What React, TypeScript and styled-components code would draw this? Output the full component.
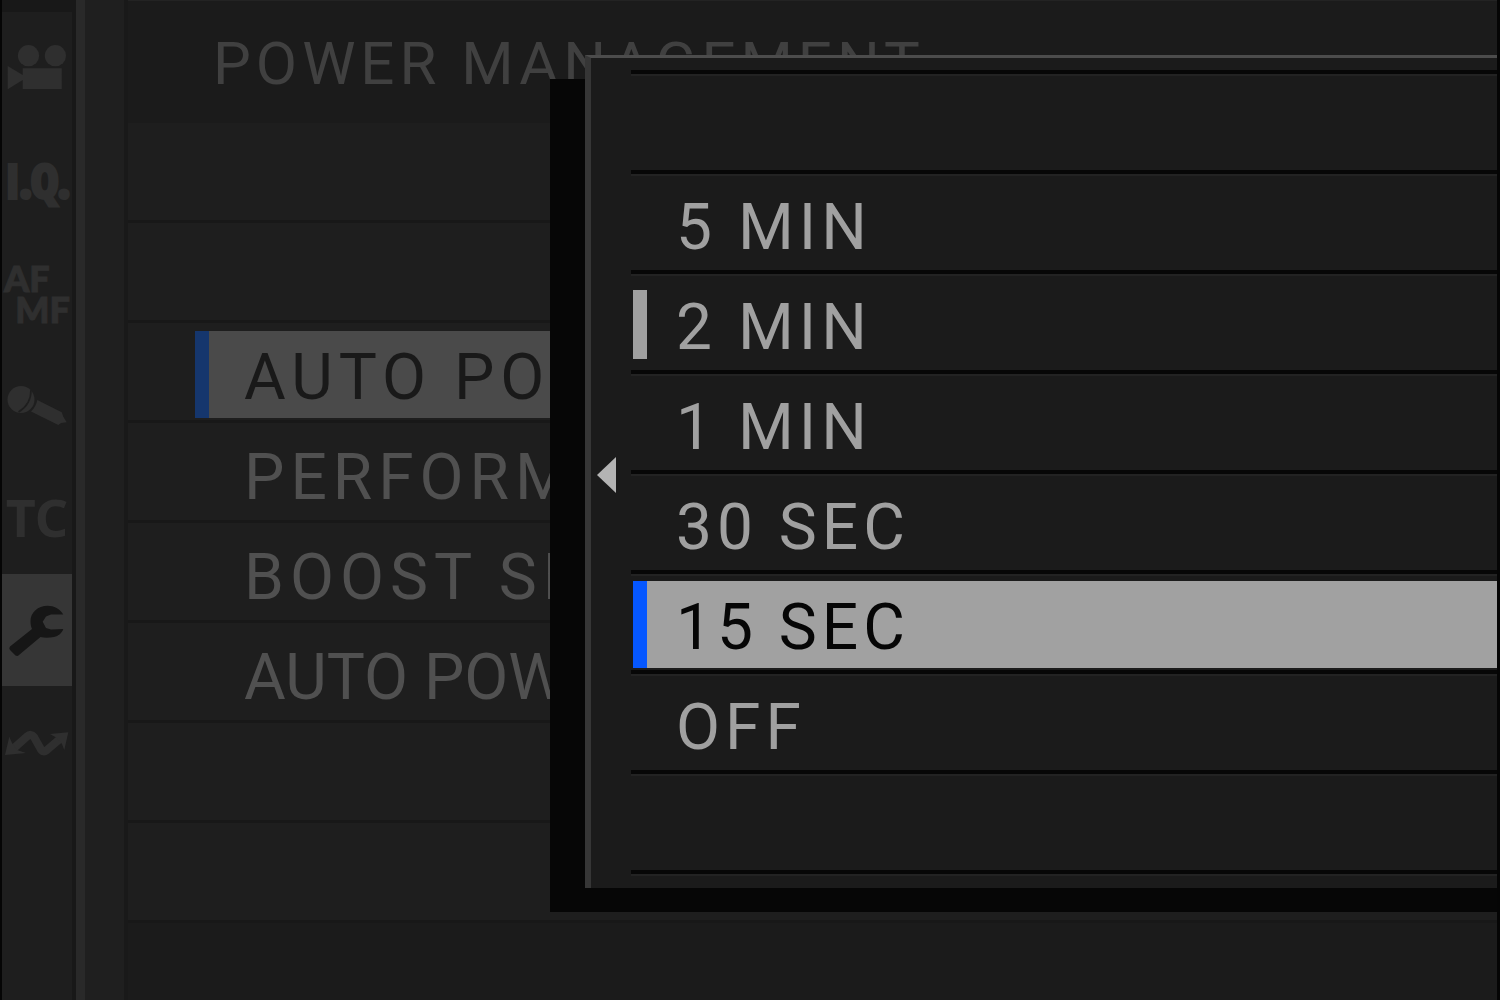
import React, { useState } from "react";
import styled, { createGlobalStyle } from "styled-components";

const GlobalStyle = createGlobalStyle`
  *, *::before, *::after { box-sizing: border-box; }
  body { margin: 0; background: #050505; }
  button { border: 0; margin: 0; padding: 0; background: none; color: inherit; font: inherit; text-align: left; }
  ul { list-style: none; margin: 0; padding: 0; }
`;

const Screen = styled.div`
  position: relative;
  display: flex;
  min-height: 100vh;
  overflow: hidden;
  background: #1b1b1b;
  border: solid #050505;
  border-width: 0 3px 0 2px;
  font-family: Roboto, "Liberation Sans", sans-serif;
`;

const Rail = styled.nav`
  flex: none;
  width: 74px;
  padding-top: 2px;
  background: #1e1e1e;
  border-top: 12px solid #181818;
  border-right: 4px solid #181818;
`;

const Tab = styled.button<{ $active?: boolean }>`
  display: flex;
  align-items: center;
  justify-content: center;
  width: 100%;
  height: 112px;
  color: ${(p) => (p.$active ? "#161616" : "#2f2f2f")};
  background: ${(p) => (p.$active ? "#363636" : "transparent")};
`;

const TabArt = styled.svg`
  display: block;
  width: 70px;
  height: 112px;
`;

const QualityMark = styled.span`
  padding: 0 0 4px 2px;
  font: 700 46px/56px "Liberation Sans Narrow", "Open Sans Condensed", Roboto, sans-serif;
  -webkit-text-stroke: 4px currentColor;
`;

const FocusMark = styled.span`
  display: flex;
  flex-direction: column;
  width: 66px;
  font: 900 36px/31px Lato, sans-serif;
  -webkit-text-stroke: 1px currentColor;
`;

const FocusLine = styled.span<{ $end?: boolean }>`
  align-self: ${(p) => (p.$end ? "flex-end" : "flex-start")};
`;

const TimeMark = styled.span`
  padding-bottom: 2px;
  font: 700 52px/56px "Noto Sans", sans-serif;
`;

const Gutter = styled.div`
  flex: none;
  width: 52px;
  background: #1f1f1f;
  border-left: 9px solid #292929;
  border-right: 4px solid #191919;
`;

const Content = styled.main`
  flex: 1;
  min-width: 0;
`;

const Title = styled.h1`
  margin: 0;
  height: 123px;
  padding: 28px 0 0 85px;
  font-size: 60px;
  line-height: 70px;
  font-weight: 400;
  letter-spacing: 5px;
  white-space: nowrap;
  color: #404040;
  border-top: 1px solid #232323;
`;

const MenuRow = styled.li`
  height: 100px;
  padding: 8px 0 2px 67px;
  background: #1e1e1e;
  border-bottom: 3px solid #181818;
`;

const Entry = styled.button<{ $marker: string; $fill: string; $ink: string }>`
  display: flex;
  align-items: center;
  width: 100%;
  height: 87px;
  padding: 7px 0 0 29px;
  overflow: hidden;
  font-size: 64px;
  line-height: 76px;
  letter-spacing: 5px;
  white-space: nowrap;
  color: ${(p) => p.$ink};
  background: ${(p) => p.$fill};
  border-left: 14px solid ${(p) => p.$marker};
`;

const MenuEntry = styled(Entry)<{ $tight?: boolean }>`
  padding-left: 35px;
  letter-spacing: ${(p) => (p.$tight ? "normal" : "6px")};
`;

const Popup = styled.section`
  position: absolute;
  top: 55px;
  left: 39%;
  right: 0;
  display: grid;
  grid-template-columns: 40px 1fr;
  padding: 12px 0;
  background: #1b1b1b;
  border-top: 3px solid #4c4c4c;
  border-left: 6px solid #363636;
  box-shadow: -35px 24px 0 #060606, 0 24px 0 #060606;
`;

const Back = styled.button`
  display: flex;
  align-items: center;
  padding: 4px 0 0 6px;
`;

const OptionRow = styled.li`
  height: 100px;
  padding: 7px 0 2px 2px;
  border-top: 4px solid #070707;
  box-shadow: inset 0 2px 0 #232323;

  &:last-child {
    height: 6px;
    padding: 0;
  }
`;

const Option = styled(Entry)<{ $stored?: boolean }>`
  border-image: ${(p) =>
    p.$stored
      ? "linear-gradient(transparent 9px, #a0a0a0 9px, #a0a0a0 78px, transparent 78px) 0 0 0 14"
      : "none"};
`;

const MovieIcon = () => (
  <TabArt viewBox="2 0 70 112" fill="currentColor" aria-hidden="true">
    <circle cx="28.5" cy="41.7" r="10.6" />
    <circle cx="55.4" cy="41.7" r="10.6" />
    <path d="M7.7 52 L22.7 61 V54.3 H61.7 V75 H22.7 V66 L7.7 75.3 Z" />
  </TabArt>
);

const MicIcon = () => (
  <TabArt viewBox="2 0 70 112" fill="currentColor" aria-hidden="true">
    <circle cx="21" cy="49.5" r="13.5" />
    <path d="M37.3 50 L61.7 62.3 L63.3 66.7 L66.7 72.3 L61 73 L58.3 75 L31 61.5 Q36 57 37.3 50 Z" />
    <path d="M31 40 C31 50 27 57 18.5 62" fill="none" stroke="#1e1e1e" strokeWidth="1.6" />
  </TabArt>
);

const WrenchIcon = () => (
  <TabArt viewBox="2 0 70 112" fill="currentColor" aria-hidden="true">
    <path d="M63.3 40.5 C60 34.5 54 31.7 47.5 31.7 C38 31.7 30.5 38.5 30.5 47 C30.5 50 31 53 32 55 L10 72.5 Q8.5 74 10 76 L15.5 81.5 Q17.5 82.5 19 81 L40.5 63 C44 64 49 64 54 63 C58.5 62 62 59 63.3 55 L51 55.5 L46 54 L42.7 47.7 L46 42.5 L51 40.5 Z" />
  </TabArt>
);

const TransferIcon = () => (
  <TabArt viewBox="2 0 70 112" fill="currentColor" aria-hidden="true">
    <path
      d="M13 63 L27 50.5 Q31 47 34 51 L41 63.5 Q43 67 47 64 L61 52"
      fill="none"
      stroke="currentColor"
      strokeWidth="8"
    />
    <path d="M5 69 L9.3 50.7 L12 57 L17 64 L26 67 Z" />
    <path d="M68.3 46.3 L50 48 L57 52 L62 58 L64.3 64 Z" />
  </TabArt>
);

const tabs = [
  { name: "Movie", art: <MovieIcon /> },
  { name: "Image quality", art: <QualityMark>I.Q.</QualityMark> },
  {
    name: "Focus",
    art: (
      <FocusMark>
        <FocusLine>AF</FocusLine>
        <FocusLine $end>MF</FocusLine>
      </FocusMark>
    ),
  },
  { name: "Audio", art: <MicIcon /> },
  { name: "Time code", art: <TimeMark>TC</TimeMark> },
  { name: "Set up", art: <WrenchIcon /> },
  { name: "Transfer", art: <TransferIcon /> },
];

const menu = ["", "", "AUTO PO", "PERFORM", "BOOST SE", "AUTO POW", "", ""];
const options = ["", "5 MIN", "2 MIN", "1 MIN", "30 SEC", "15 SEC", "OFF", "", ""];
const stored = "2 MIN";

export default function App() {
  const [tab, setTab] = useState("Set up");
  const [entry, setEntry] = useState("AUTO PO");
  const [choice, setChoice] = useState("15 SEC");

  return (
    <Screen>
      <GlobalStyle />
      <Rail aria-label="Menu pages">
        {tabs.map((t) => (
          <Tab key={t.name} $active={t.name === tab} aria-label={t.name} onClick={() => setTab(t.name)}>
            {t.art}
          </Tab>
        ))}
      </Rail>
      <Gutter />
      <Content>
        <Title>POWER MANAGEMENT</Title>
        <ul>
          {menu.map((label, i) => {
            const on = label === entry;
            return (
              <MenuRow key={i}>
                {label && (
                  <MenuEntry
                    $marker={on ? "#15366d" : "transparent"}
                    $fill={on ? "#4a4a4a" : "transparent"}
                    $ink={on ? "#191919" : "#505050"}
                    $tight={label === "AUTO POW"}
                    onClick={() => setEntry(label)}
                  >
                    {label}
                  </MenuEntry>
                )}
              </MenuRow>
            );
          })}
        </ul>
      </Content>
      <Popup aria-label={entry}>
        <Back aria-label="Back">
          <svg width="19" height="36" viewBox="0 0 19 36" aria-hidden="true">
            <path d="M19 0 V36 L0 18 Z" fill="#b4b4b4" />
          </svg>
        </Back>
        <ul>
          {options.map((label, i) => {
            const on = label === choice;
            return (
              <OptionRow key={i}>
                {label && (
                  <Option
                    $marker={on ? "#0557ff" : "transparent"}
                    $fill={on ? "#a1a1a1" : "transparent"}
                    $ink={on ? "#060606" : "#a0a0a0"}
                    $stored={label === stored && !on}
                    aria-pressed={on}
                    onClick={() => setChoice(label)}
                  >
                    {label}
                  </Option>
                )}
              </OptionRow>
            );
          })}
        </ul>
      </Popup>
    </Screen>
  );
}
